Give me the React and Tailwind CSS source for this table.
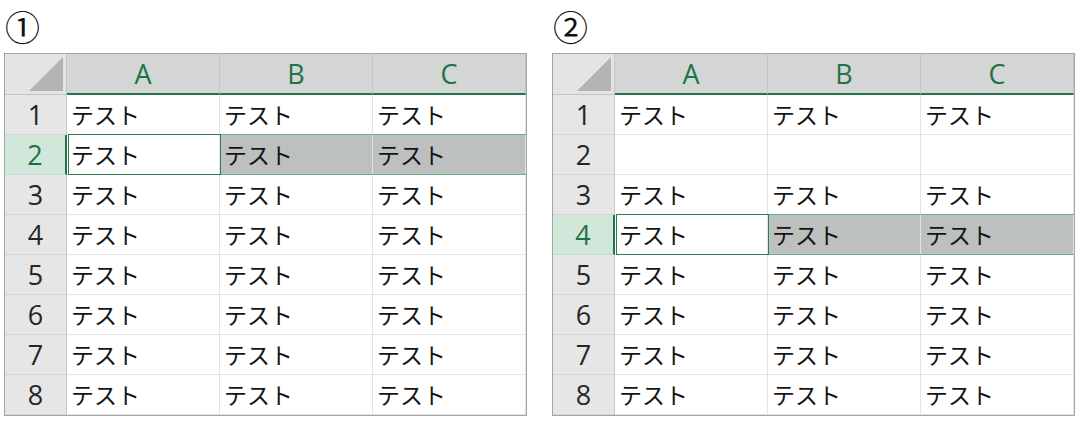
import React from "react";

const COLS = ["A", "B", "C"];
const ROWS = [1, 2, 3, 4, 5, 6, 7, 8];

function Row({ r, selected, empty }) {
  return (
    <div className="relative flex h-[40px]">
      <div
        className={
          "w-[62px] flex items-center justify-center text-[27px] leading-none border-b " +
          (selected
            ? "bg-[#d1e7da] text-[#1e7145] border-r-2 border-r-[#217346] border-b-[#c9d9cf]"
            : "bg-[#e5e6e5] text-[#262626] border-r border-r-[#c6c8c7] border-b-[#d4d6d5]")
        }
      >
        {r}
      </div>
      {COLS.map((c, ci) => (
        <div
          key={c}
          className={
            "w-[153px] flex items-center pl-[4px] text-[23px] leading-none text-[#141414] border-r border-b border-[#e2e3e2] font-['Noto_Sans_CJK_JP',sans-serif] " +
            (selected && ci > 0 ? "bg-[#bcc0be]" : "bg-white")
          }
        >
          {empty ? "" : "テスト"}
        </div>
      ))}
      {selected && (
        <>
          <div className="absolute left-[63px] right-0 top-[-1px] bottom-0 border-y border-[#6fae8b] pointer-events-none" />
          <div className="absolute left-[63px] w-[153px] top-[-1px] bottom-0 border border-[#2e7d52] pointer-events-none" />
        </>
      )}
    </div>
  );
}

function Sheet({ selRow, emptyRow }) {
  return (
    <div className="flex flex-col w-[523px] border border-[#a3a5a4] bg-white font-['Open_Sans','Noto_Sans_CJK_JP',sans-serif]">
      <div className="flex h-[41px]">
        <div className="relative w-[62px] bg-[#e3e4e3] border-r border-b border-[#c4c6c5] overflow-hidden">
          <svg className="absolute right-[3px] bottom-[3px]" width="34" height="34" viewBox="0 0 34 34">
            <polygon points="34,0 34,34 0,34" fill="#b2b5b3" />
          </svg>
        </div>
        {COLS.map((c) => (
          <div
            key={c}
            className="w-[153px] flex items-center justify-center bg-[#d3d6d5] border-r border-[#c2c5c4] border-b-2 border-b-[#217346] text-[#217346] text-[27px] leading-none"
          >
            {c}
          </div>
        ))}
      </div>
      {ROWS.map((r) => (
        <Row key={r} r={r} selected={r === selRow} empty={r === emptyRow} />
      ))}
    </div>
  );
}

function Panel({ label, selRow, emptyRow }) {
  return (
    <div className="flex flex-col">
      <div className="h-[53px] pl-[1px] text-[35px] leading-[51px] text-[#111] font-['Noto_Sans_CJK_JP',sans-serif]">
        {label}
      </div>
      <Sheet selRow={selRow} emptyRow={emptyRow} />
    </div>
  );
}

export default function App() {
  return (
    <div className="w-[1080px] h-[421px] bg-white flex gap-[25px] pl-[4px]">
      <Panel label="①" selRow={2} />
      <Panel label="②" selRow={4} emptyRow={2} />
    </div>
  );
}
